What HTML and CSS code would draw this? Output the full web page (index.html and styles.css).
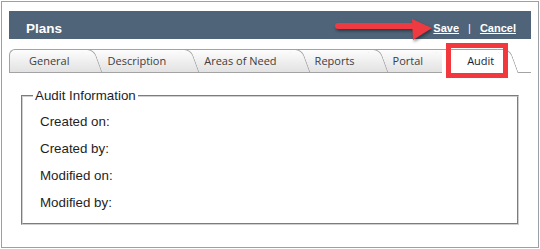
FILE: index.html
```html
<!DOCTYPE html>
<html lang="en-us">
<head>
    <meta charset="UTF-8">
    <meta name="viewport" content="width=device-width, initial-scale=1.0">
    <title>Plans - Audit</title>
    <link rel="stylesheet" href="styles.css">
</head>
<body>
    <div class="frame">
        <div class="titlebar">
            <span class="title">Plans</span>
            <div class="actions">
                <a href="#">Save</a>
                <span class="sep">|</span>
                <a href="#">Cancel</a>
            </div>
            <!-- callout arrow pointing at Save -->
            <svg class="callout-arrow" width="102" height="30" viewBox="0 0 102 30">
                <line x1="3" y1="10" x2="80" y2="10" stroke="#ee3a40" stroke-width="6" stroke-linecap="round"/>
                <polygon points="77,3 97,12 78,24" fill="#ee3a40"/>
            </svg>
        </div>

        <div class="tabs">
            <div class="tab t1">General</div>
            <div class="tab t2">Description</div>
            <div class="tab t3">Areas of Need</div>
            <div class="tab t4">Reports</div>
            <div class="tab t5">Portal</div>
            <div class="tab t6 active">Audit</div>
        </div>

        <div class="panel">
            <fieldset class="info">
                <legend>Audit Information</legend>
                <div class="field">Created on:</div>
                <div class="field">Created by:</div>
                <div class="field">Modified on:</div>
                <div class="field">Modified by:</div>
            </fieldset>
        </div>
    </div>
</body>
</html>
```

FILE: styles.css
```css
        body {
            margin: 0;
            font-family: "Liberation Sans", Arial, sans-serif;
            background-color: #fff;
        }
        .frame {
            margin: 1px;
            width: 538px;
            height: 247px;
            box-sizing: border-box;
            border: 1px solid #9aa1a6;
            padding: 9px 7px 0 7px;
        }

        /* header bar */
        .titlebar {
            position: relative;
            height: 28px;
            box-sizing: border-box;
            padding: 6px 15px 0 17px;
            background-color: #4f6479;
            color: #fff;
            display: flex;
            align-items: center;
            justify-content: space-between;
        }
        .title {
            font-weight: bold;
            font-size: 13.5px;
        }
        .actions {
            display: flex;
            align-items: center;
            font-size: 11px;
        }
        .actions a {
            color: #fff;
            font-weight: bold;
        }
        .sep {
            margin: 0 9px;
        }
        .callout-arrow {
            position: absolute;
            left: 326px;
            top: 5px;
            filter: drop-shadow(1px 2px 1.5px rgba(0, 0, 0, 0.45));
        }

        /* tab strip */
        .tabs {
            display: flex;
            margin-top: 10px;
            height: 23px;
            border-bottom: 1px solid #a3a3a3;
        }
        .tab {
            position: relative;
            height: 22px;
            line-height: 22px;
            padding: 0 19px;
            border-top: 1px solid #a3a3a3;
            background: linear-gradient(#fdfdfd, #e2e2e2);
            font-family: "Open Sans", sans-serif;
            font-size: 11px;
            color: #3d3d3d;
        }
        .tab::after {
            content: "";
            position: absolute;
            top: -1px;
            bottom: 0;
            right: -6px;
            width: 12px;
            background: linear-gradient(#fdfdfd, #e2e2e2);
            border-top: 1px solid #a3a3a3;
            border-right: 1px solid #a3a3a3;
            border-top-right-radius: 7px;
            transform: skewX(20deg);
            transform-origin: top left;
        }
        .tab.t1 {
            border-left: 1px solid #a3a3a3;
            border-top-left-radius: 6px;
            z-index: 6;
        }
        .tab.t2 { z-index: 5; }
        .tab.t3 { z-index: 4; }
        .tab.t4 { z-index: 3; }
        .tab.t5 { z-index: 2; }
        .tab.active {
            z-index: 10;
            height: 23px;
            margin-bottom: -1px;
            padding: 0 10px 0 25px;
            background: #fff;
            color: #1c1c2c;
        }
        .tab.active::after {
            background: #fff;
        }
        /* red highlight box */
        .tab.active::before {
            content: "";
            position: absolute;
            left: 4px;
            top: -7px;
            width: 62px;
            height: 35px;
            box-sizing: border-box;
            border: 5px solid #f2373d;
            z-index: 2;
        }

        /* tab content */
        .panel {
            padding: 0 12px 0 12px;
        }
        .info {
            margin: 15px 0 0 0;
            padding: 5px 10px 7px 10px;
            border: 2px groove #d0d0d0;
            color: #1e1e1e;
            font-size: 13.33px;
        }
        .info legend {
            padding: 0 2px;
        }
        .field {
            margin-left: 7px;
            line-height: 27px;
        }
```
